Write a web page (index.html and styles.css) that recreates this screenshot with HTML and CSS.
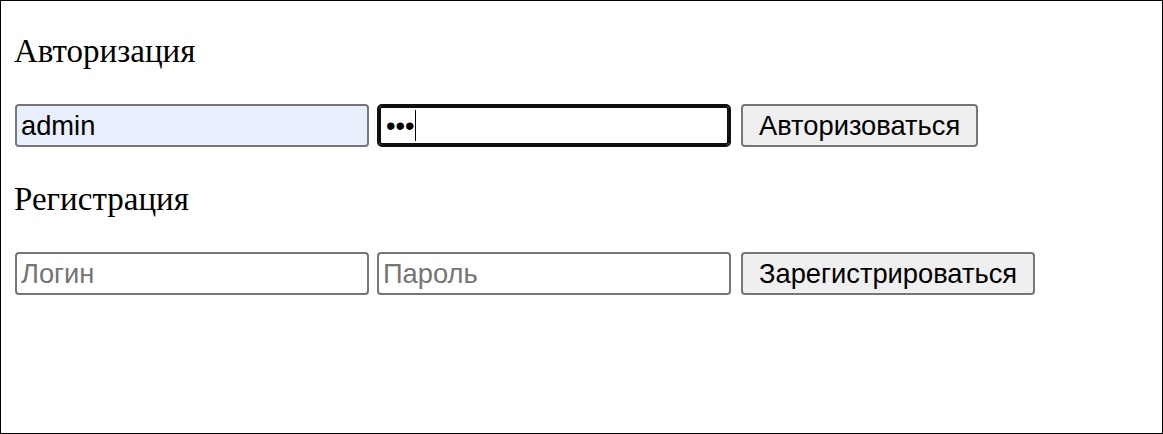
FILE: index.html
```html
<!DOCTYPE html>
<html lang="ru">
<head>
<meta charset="utf-8">
<title>Авторизация</title>
<link rel="stylesheet" href="styles.css">
</head>
<body>
<div class="page">
  <div class="title">Авторизация</div>
  <div class="row">
    <input class="field autofill" type="text" value="admin">
    <span class="focus-wrap">
      <input class="field focused" type="password" value="123">
      <span class="caret"></span>
    </span>
    <button class="btn" type="button">Авторизоваться</button>
  </div>
  <div class="title">Регистрация</div>
  <div class="row">
    <input class="field" type="text" placeholder="Логин">
    <input class="field" type="password" placeholder="Пароль">
    <button class="btn" type="button">Зарегистрироваться</button>
  </div>
</div>
</body>
</html>
```

FILE: styles.css
```css
html, body {
  margin: 0;
  padding: 0;
  background: #fff;
}

.page {
  box-sizing: border-box;
  width: 1163px;
  height: 434px;
  border: 1px solid #000;
  padding: 32px 14px 0 14px;
  display: flex;
  flex-direction: column;
  gap: 34px;
}

.title {
  font-family: "Liberation Serif", "Times New Roman", serif;
  font-size: 33px;
  line-height: 37px;
  color: #000;
  margin-left: -1px;
}

.row {
  display: flex;
  align-items: center;
  height: 43px;
}

.field {
  box-sizing: border-box;
  width: 354px;
  height: 43px;
  margin: 0 8px 0 0;
  padding: 2px 4px;
  border: 2px solid #767676;
  border-radius: 4px;
  background: #fff;
  font-family: "Liberation Sans", Arial, sans-serif;
  font-size: 27.3px;
  color: #000;
  outline: none;
  caret-color: transparent;
}

.field::placeholder {
  color: #757575;
  opacity: 1;
}

.autofill {
  background: #e8f0fe;
}

.focus-wrap {
  position: relative;
  display: block;
  width: 354px;
  height: 43px;
  margin-right: 10px;
}

.focused {
  margin: 0;
  border-color: #101010;
  border-radius: 5px;
  box-shadow: inset 0 0 0 2px #101010;
  padding-left: 7px;
}

.caret {
  position: absolute;
  left: 38px;
  top: 6px;
  width: 1px;
  height: 31px;
  background: #000;
}

.row > .field:nth-child(2) {
  margin-right: 10px;
}

.btn {
  box-sizing: border-box;
  height: 43px;
  margin: 0;
  padding: 0 16px;
  border: 2px solid #767676;
  border-radius: 4px;
  background: #efefef;
  font-family: "Liberation Sans", Arial, sans-serif;
  font-size: 27.3px;
  color: #000;
}
```
